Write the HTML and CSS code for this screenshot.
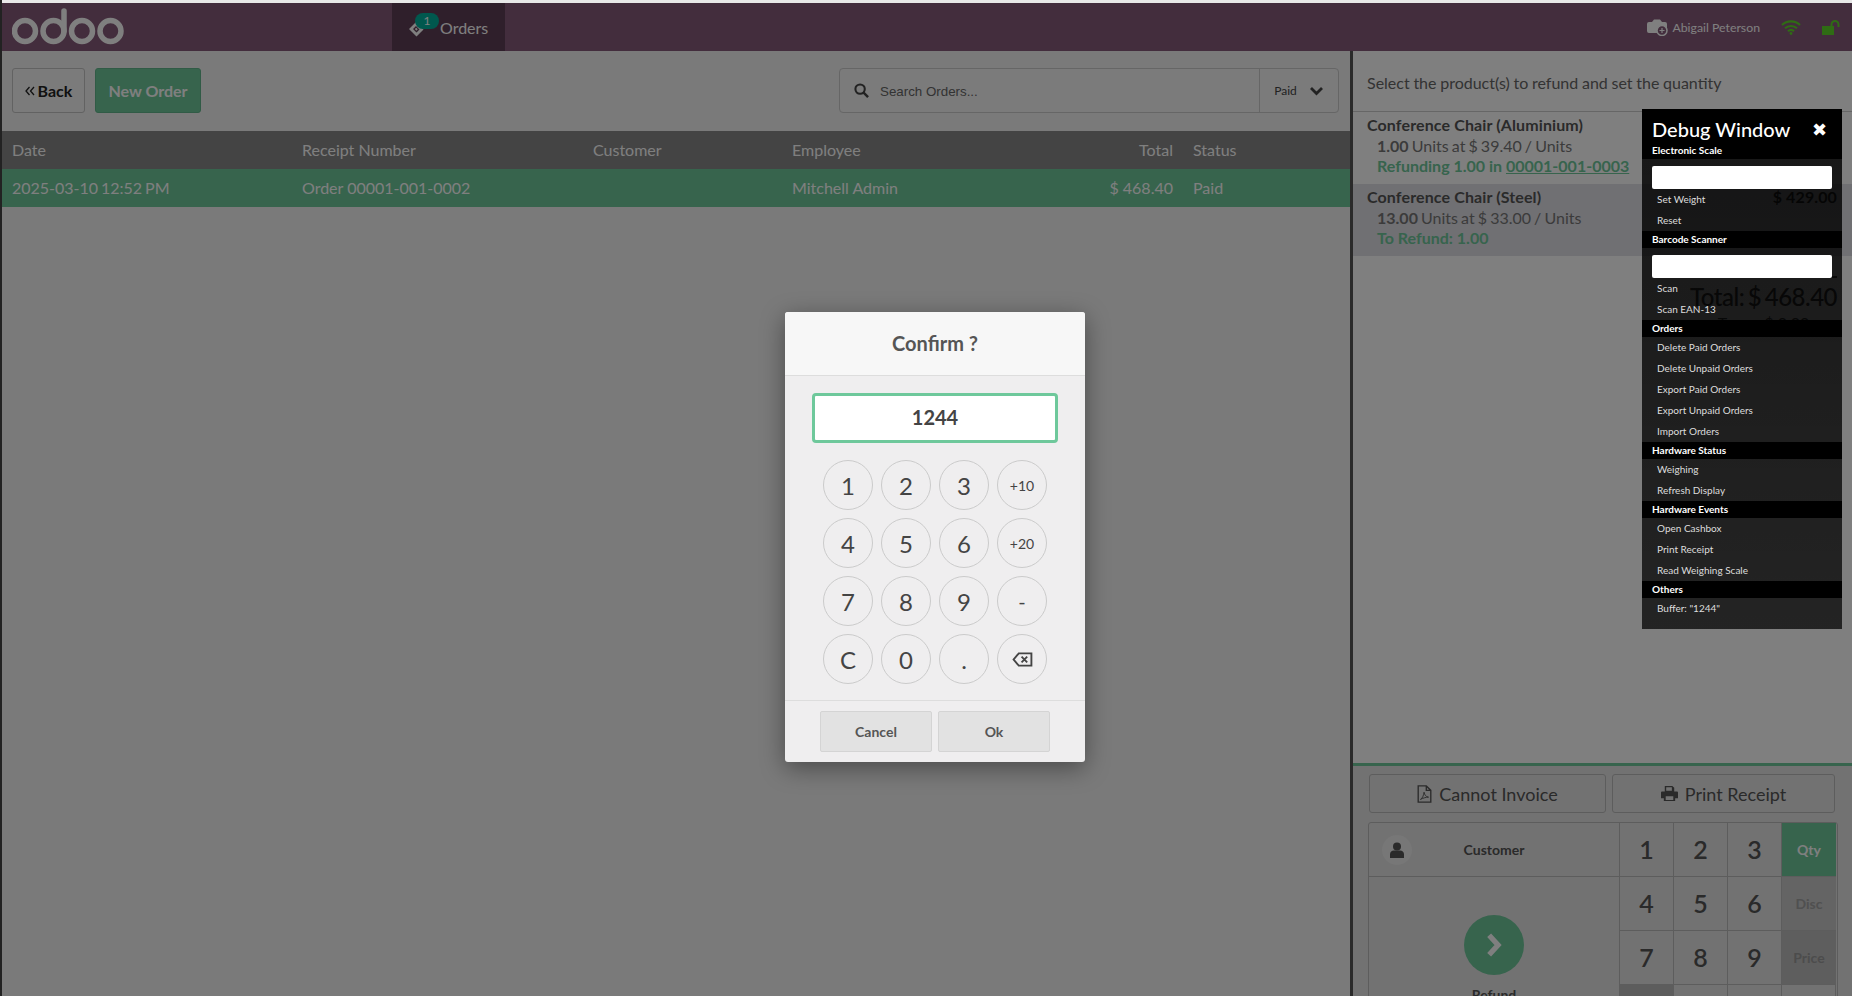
FILE: index.html
```html
<!DOCTYPE html>
<html lang="en">
<head>
    <meta charset="UTF-8">
    <title>Odoo POS</title>
    <link rel="stylesheet" href="styles.css">
</head>
<body>
<div class="pos">
    <header class="topbar">
        <svg class="logo" viewBox="0 0 112 38" width="112" height="38">
            <g fill="none" stroke="currentColor" stroke-width="5.500" stroke-linecap="round">
                <circle cx="13" cy="23" r="10.500"/>
                <circle cx="41.500" cy="23" r="10.500"/>
                <path d="M52 23V3"/>
                <circle cx="70" cy="23" r="10.500"/>
                <circle cx="98.500" cy="23" r="10.500"/>
            </g>
        </svg>
        <div class="tab">
            <span class="tab-icon">
                <svg viewBox="0 0 16 16" width="16" height="16"><path fill="currentColor" d="M1 8l7-7 7.500 7.500-7 7zM5 8l3.500 3.500 3-3L8 5z" fill-rule="evenodd"/><path fill="currentColor" d="M6.800 8l1.500-1.300 1.400 1.600-1.300 1.400z"/></svg>
                <span class="badge">1</span>
            </span>
            <span>Orders</span>
        </div>
        <div class="status">
            <svg class="cam" viewBox="0 0 21 17" width="21" height="17"><path fill="currentColor" d="M2 3h3l2-2.500h6L15 3h3a2 2 0 0 1 2 2v7a2 2 0 0 1-2 2H2a2 2 0 0 1-2-2V5a2 2 0 0 1 2-2z"/><circle cx="15" cy="11.500" r="5" fill="#875a7b" stroke="currentColor" stroke-width="1.500"/><path d="M15 9v5M12.500 11.500h5" stroke="currentColor" stroke-width="1.200"/></svg>
            <span class="cashier">Abigail Peterson</span>
            <svg class="wifi" viewBox="0 0 20 15" width="20" height="15"><g fill="none" stroke="currentColor" stroke-width="2.200"><path d="M1 5a13 13 0 0 1 18 0"/><path d="M4 8.300a9 9 0 0 1 12 0"/><path d="M7 11.200a4.500 4.500 0 0 1 6 0"/></g><circle cx="10" cy="13.500" r="1.400" fill="currentColor"/></svg>
            <svg class="lock" viewBox="0 0 18 15" width="18" height="15"><path fill="currentColor" d="M0 6h12v9H0z"/><path d="M9.500 6V4.500a3.500 3.500 0 0 1 7 0V7" fill="none" stroke="currentColor" stroke-width="2"/></svg>
        </div>
    </header>

    <main class="screen">
        <section class="orders">
            <div class="controls">
                <button class="btn btn-back">
                    <svg viewBox="0 0 10 10" width="10" height="10"><path d="M4.500 1L1 5l3.500 4M9 1L5.500 5 9 9" fill="none" stroke="currentColor" stroke-width="1.300"/></svg>
                    <span>Back</span>
                </button>
                <button class="btn btn-new">New Order</button>
                <div class="search">
                    <svg viewBox="0 0 16 16" width="15" height="15"><circle cx="6.500" cy="6.500" r="5" fill="none" stroke="currentColor" stroke-width="2.200"/><path d="M10 10l5 5" stroke="currentColor" stroke-width="2.600"/></svg>
                    <span class="search-text">Search Orders...</span>
                    <div class="search-filter">
                        <span>Paid</span>
                        <svg viewBox="0 0 14 10" width="15" height="10"><path d="M1.500 2l5.500 5.500L12.500 2" fill="none" stroke="currentColor" stroke-width="2.800"/></svg>
                    </div>
                </div>
            </div>
            <div class="order-row order-head">
                <div>Date</div><div>Receipt Number</div><div>Customer</div><div>Employee</div><div class="right">Total</div><div>Status</div>
            </div>
            <div class="order-row order-sel">
                <div class="order-date">2025-03-10 12:52 PM</div><div>Order 00001-001-0002</div><div></div><div>Mitchell Admin</div><div class="right">$ 468.40</div><div>Paid</div>
            </div>
        </section>

        <aside class="detail">
            <div class="lines">
                <div class="hint">Select the product(s) to refund and set the quantity</div>
                <div class="line">
                    <div class="line-name">Conference Chair (Aluminium)</div>
                    <div class="line-info"><b>1.00</b> Units at $ 39.40 / Units</div>
                    <div class="line-refund">Refunding 1.00 in <u>00001-001-0003</u></div>
                </div>
                <div class="line line-sel">
                    <div class="line-name line-top"><span>Conference Chair (Steel)</span><span class="line-price">$ 429.00</span></div>
                    <div class="line-info"><b>13.00</b> Units at $ 33.00 / Units</div>
                    <div class="line-refund">To Refund: 1.00</div>
                </div>
                <div class="summary">
                    <div class="summary-box">
                        <div class="sum-total">Total: $ 468.40</div>
                        <div class="sum-tax">Taxes: $ 0.00</div>
                    </div>
                </div>
            </div>
            <div class="pads">
                <div class="actions">
                    <button class="act act-inv">
                        <svg viewBox="0 0 16 20" width="15" height="18"><path fill="none" stroke="currentColor" stroke-width="1.500" d="M1 1h9l5 5v13H1zM10 1v5h5"/><path fill="none" stroke="currentColor" d="M3.500 16c2-1 3.500-4 4-8 .5 3 2 5 5 5.500-3 0-6 1-9 2.500z"/></svg>
                        Cannot Invoice
                    </button>
                    <button class="act act-print">
                        <svg viewBox="0 0 18 18" width="17" height="17"><path fill="currentColor" d="M4 1h8l2 2v4H4zM1 7h16a1 1 0 0 1 1 1v6h-3v3H3v-3H0V8a1 1 0 0 1 1-1z"/><path fill="#e4e4e4" d="M5 12h8v4H5zM5.500 2.500h6V6h-6z"/></svg>
                        Print Receipt
                    </button>
                </div>
                <div class="control-pad">
                    <div class="pad-left">
                        <div class="customer">
                            <span class="avatar"><svg viewBox="0 0 14 16" width="14" height="16"><circle cx="7" cy="4.500" r="4" fill="currentColor"/><path fill="currentColor" d="M0 16v-4a4 4 0 0 1 4-3.500h6a4 4 0 0 1 4 3.500v4z"/></svg></span>
                            <span class="customer-name">Customer</span>
                        </div>
                        <div class="refund">
                            <span class="refund-btn"><svg viewBox="0 0 24 32" width="20" height="26"><path d="M6 4l11 12L6 28" fill="none" stroke="currentColor" stroke-width="6.500"/></svg></span>
                            <span class="refund-label">Refund</span>
                        </div>
                    </div>
                    <div class="keys">
                        <div class="key">1</div><div class="key">2</div><div class="key">3</div><div class="key mode mode-on">Qty</div>
                        <div class="key">4</div><div class="key">5</div><div class="key">6</div><div class="key mode mode-off">Disc</div>
                        <div class="key">7</div><div class="key">8</div><div class="key">9</div><div class="key mode mode-off2">Price</div>
                        <div class="key key-off"></div><div class="key"></div><div class="key"></div><div class="key"></div>
                    </div>
                </div>
            </div>
        </aside>
    </main>

    <div class="backdrop">
        <div class="modal">
            <div class="modal-title">Confirm ?</div>
            <div class="modal-body">
                <div class="modal-input">1244</div>
                <div class="numpad">
                    <div class="num">1</div><div class="num">2</div><div class="num">3</div><div class="num num-sm">+10</div>
                    <div class="num">4</div><div class="num">5</div><div class="num">6</div><div class="num num-sm">+20</div>
                    <div class="num">7</div><div class="num">8</div><div class="num">9</div><div class="num num-minus">-</div>
                    <div class="num">C</div><div class="num">0</div><div class="num">.</div>
                    <div class="num"><svg viewBox="0 0 22 16" width="21" height="15"><path fill="none" stroke="currentColor" stroke-width="2" d="M7 1.500h13.500v13H7L1.500 8z"/><path stroke="currentColor" stroke-width="2" d="M10 5l6 6M16 5l-6 6"/></svg></div>
                </div>
            </div>
            <div class="modal-foot">
                <button class="modal-btn">Cancel</button>
                <button class="modal-btn">Ok</button>
            </div>
        </div>
    </div>

    <div class="debug">
        <div class="debug-head">
            <div class="debug-title"><span>Debug Window</span><span class="debug-close">✖</span></div>
            <div class="debug-sub">Electronic Scale</div>
        </div>
        <div class="debug-input"></div>
        <div class="debug-item">Set Weight</div>
        <div class="debug-item">Reset</div>
        <div class="debug-sec">Barcode Scanner</div>
        <div class="debug-input"></div>
        <div class="debug-item">Scan</div>
        <div class="debug-item">Scan EAN-13</div>
        <div class="debug-sec">Orders</div>
        <div class="debug-item">Delete Paid Orders</div>
        <div class="debug-item">Delete Unpaid Orders</div>
        <div class="debug-item">Export Paid Orders</div>
        <div class="debug-item">Export Unpaid Orders</div>
        <div class="debug-item">Import Orders</div>
        <div class="debug-sec">Hardware Status</div>
        <div class="debug-item">Weighing</div>
        <div class="debug-item">Refresh Display</div>
        <div class="debug-sec">Hardware Events</div>
        <div class="debug-item">Open Cashbox</div>
        <div class="debug-item">Print Receipt</div>
        <div class="debug-item">Read Weighing Scale</div>
        <div class="debug-sec">Others</div>
        <div class="debug-item">Buffer: "1244"</div>
    </div>
</div>
</body>
</html>
```

FILE: styles.css
```css
* {
    box-sizing: border-box;
}

html, body {
    margin: 0;
    height: 100%;
    overflow: hidden;
}

body {
    font-family: Lato, "Noto Sans", sans-serif;
    color: #555;
    background: #e8e8e8;
}

.pos {
    position: relative;
    height: 996px;
    padding-top: 3px;
    display: flex;
    flex-direction: column;
    overflow: hidden;
    border-left: 2px solid #222;
}

button {
    font-family: inherit;
}

/* top bar */
.topbar {
    height: 48px;
    flex: none;
    display: flex;
    align-items: center;
    background: #875a7b;
    color: #fff;
}

.logo {
    margin-left: 10px;
    flex: none;
    color: #fff;
}

.tab {
    margin-left: 268px;
    width: 113px;
    height: 100%;
    padding-left: 16px;
    background: #5f3f57;
    display: flex;
    align-items: center;
    gap: 16px;
    font-size: 16px;
}

.tab-icon {
    position: relative;
    display: flex;
    margin-top: 4px;
}

.badge {
    position: absolute;
    top: -8px;
    left: 7px;
    width: 24px;
    height: 16px;
    border-radius: 8px;
    background: #00b09c;
    font-size: 12px;
    line-height: 16px;
    text-align: center;
}

.status {
    margin-left: auto;
    padding-right: 12px;
    display: flex;
    align-items: center;
    font-size: 12.300px;
}

.cashier {
    margin-left: 4px;
}

.wifi {
    margin-left: 21px;
    color: #5ed828;
}

.lock {
    margin-left: 21px;
    color: #5ed828;
}

/* main */
.screen {
    flex: 1;
    min-height: 0;
    display: flex;
}

.orders {
    width: 1348px;
    flex: none;
    background: #f4f4f4;
}

.controls {
    height: 80px;
    padding: 17px 11px 0 10px;
    display: flex;
    align-items: flex-start;
    gap: 10px;
}

.btn {
    height: 45px;
    border-radius: 3px;
    font-size: 16px;
    font-weight: 700;
}

.btn-back {
    width: 73px;
    background: #f6f6f6;
    border: 1px solid #c4c4c4;
    color: #222;
    padding: 0;
    display: flex;
    align-items: center;
    justify-content: center;
    gap: 3px;
}

.btn-new {
    width: 106px;
    background: #6ec89b;
    border: 1px solid #62b78c;
    color: #fff;
    padding: 0;
}

.search {
    margin-left: auto;
    width: 500px;
    height: 45px;
    display: flex;
    align-items: center;
    background: #f6f6f6;
    border: 1px solid #ccc;
    border-radius: 4px;
    padding-left: 14px;
    color: #444;
    font-family: "Liberation Sans", sans-serif;
    font-size: 13.330px;
}

.search-text {
    margin: 2px 0 0 11px;
    flex: 1;
    color: #666;
}

.search-filter {
    width: 79px;
    height: 100%;
    border-left: 1px solid #ccc;
    display: flex;
    align-items: center;
    justify-content: center;
    gap: 12px;
    font-family: Lato, sans-serif;
    font-size: 12px;
}

.order-row {
    height: 38px;
    display: grid;
    grid-template-columns: 290px 291px 199px 281px 100px 1fr;
    align-items: center;
    padding: 0 0 2px 10px;
    font-size: 16px;
    color: #fff;
}

.order-head {
    background: #888;
}

.order-sel {
    background: #6ec89b;
}

.order-date {
    word-spacing: -1.200px;
}

.right {
    text-align: right;
}

.order-row > div:last-child {
    padding-left: 20px;
}

/* right side */
.detail {
    flex: 1;
    display: flex;
    flex-direction: column;
    min-width: 0;
    border-left: 3px solid #555;
    background: #fff;
}

.lines {
    flex: 1;
    min-height: 0;
}

.hint {
    height: 61px;
    padding: 22px 14px 0;
    font-size: 16px;
    word-spacing: -.4px;
    color: #666;
    border-bottom: 1px solid #ccc;
}

.line {
    height: 72px;
    padding: 3px 15px 0 14px;
    font-size: 16px;
    line-height: 20.500px;
}

.line-sel {
    background: #e0e0e6;
}

.line-name {
    font-weight: 700;
    letter-spacing: .12px;
    color: #555;
}

.line-top {
    display: flex;
    justify-content: space-between;
}

.line-price {
    color: #333;
}

.line-info {
    padding-left: 10px;
    word-spacing: -1px;
    color: #777;
}

.line-refund {
    padding-left: 10px;
    color: #6ec89b;
    font-weight: 700;
}

.summary {
    display: flex;
    justify-content: flex-end;
    padding: 20px 15px 0 0;
    color: #444;
}

.summary-box {
    border-top: 2px solid #444;
    text-align: center;
}

.sum-total {
    font-size: 24px;
    font-weight: 500;
    line-height: 34px;
    margin-top: 2px;
    letter-spacing: -.5px;
    word-spacing: -2px;
}

.sum-tax {
    font-size: 16px;
    line-height: 18px;
}

.pads {
    height: 233px;
    flex: none;
    border-top: 3px solid #6ec89b;
    background: #e4e4e4;
    padding: 8px 14px 0 15px;
}

.actions {
    display: flex;
    gap: 6px;
    height: 39px;
    margin-left: 1px;
}

.act {
    height: 100%;
    background: transparent;
    border: 1px solid #bbb;
    border-radius: 3px;
    font-size: 18px;
    color: #555;
    display: flex;
    align-items: center;
    justify-content: center;
    gap: 7px;
}

.act-inv {
    width: 237px;
}

.act-print {
    width: 223px;
}

.control-pad {
    margin-top: 9px;
    display: grid;
    grid-template-columns: 251px 216px;
    border: 1px solid #bbb;
    border-radius: 3px 3px 0 0;
    height: 260px;
}

.pad-left {
    border-right: 1px solid #bbb;
}

.customer {
    height: 54px;
    border-bottom: 1px solid #bbb;
    display: flex;
    align-items: center;
    padding-left: 13px;
}

.avatar {
    width: 30px;
    height: 30px;
    border-radius: 50%;
    background: #eee;
    display: flex;
    align-items: center;
    justify-content: center;
    color: #555;
}

.customer-name {
    flex: 1;
    padding-right: 43px;
    text-align: center;
    font-size: 14px;
    font-weight: 700;
}

.refund {
    display: flex;
    flex-direction: column;
    align-items: center;
    padding-top: 38px;
}

.refund-btn {
    width: 60px;
    height: 60px;
    border-radius: 50%;
    background: #6ec89b;
    color: #fff;
    display: flex;
    align-items: center;
    justify-content: center;
}

.refund-label {
    margin-top: 11px;
    font-size: 14px;
    font-weight: 700;
}

.keys {
    display: grid;
    grid-template-columns: repeat(4, 54px);
    grid-auto-rows: 54px;
}

.key {
    display: flex;
    align-items: center;
    justify-content: center;
    padding-bottom: 2px;
    font-size: 25px;
    font-weight: 600;
    border-right: 1px solid #bbb;
    border-bottom: 1px solid #bbb;
}

.mode {
    font-size: 14px;
    font-weight: 700;
    border-right: 0;
    padding-bottom: 0;
}

.mode-on {
    background: #6ec89b;
    color: #fff;
}

.mode-off {
    background: #c8c8c8;
    color: #a0a0a0;
}

.mode-off2 {
    background: #bcbcbc;
    color: #999;
}

.key-off {
    background: #bbb;
}

/* popup */
.backdrop {
    position: absolute;
    left: 0;
    right: 0;
    top: 3px;
    bottom: 0;
    background: rgba(0, 0, 0, .5);
    display: flex;
    justify-content: center;
    padding-top: 309px;
    padding-left: 16px;
}

.modal {
    width: 300px;
    height: 450px;
    background: #efeeef;
    border-radius: 3px;
    box-shadow: 0 6px 24px rgba(0, 0, 0, .4);
    display: flex;
    flex-direction: column;
    color: #444;
}

.modal-title {
    height: 64px;
    background: #f7f7f7;
    border-bottom: 1px solid #ddd;
    border-radius: 3px 3px 0 0;
    text-align: center;
    font-size: 20px;
    font-weight: 700;
    line-height: 63px;
    color: #555;
}

.modal-body {
    flex: 1;
    padding: 17px 27px 0;
}

.modal-input {
    height: 50px;
    background: #fff;
    border: 3px solid #6ec89b;
    border-radius: 4px;
    text-align: center;
    font-size: 20px;
    font-weight: 700;
    line-height: 43px;
}

.numpad {
    margin-top: 17px;
    padding: 0 9px 0 11px;
    display: grid;
    grid-template-columns: repeat(4, 50px);
    grid-auto-rows: 50px;
    gap: 8px;
}

.num {
    border: 1px solid #cbcbcb;
    border-radius: 50%;
    display: flex;
    align-items: center;
    justify-content: center;
    font-size: 24px;
}

.num-sm {
    font-size: 14px;
}

.num-minus {
    font-size: 20px;
}

.modal-foot {
    height: 62px;
    flex: none;
    border-top: 1px solid #ddd;
    padding: 10px 35px 0;
    display: flex;
    gap: 6px;
}

.modal-btn {
    width: 112px;
    height: 41px;
    background: #e2e2e2;
    border: 1px solid #d4d4d4;
    border-radius: 2px;
    color: #555;
    font-size: 14px;
    font-weight: 700;
    padding: 0;
}

/* debug window */
.debug {
    position: absolute;
    top: 109px;
    right: 10px;
    width: 200px;
    height: 520px;
    background: linear-gradient(rgba(0, 0, 0, .82), rgba(0, 0, 0, .72));
    color: #ddd;
    font-size: 10px;
}

.debug-head {
    height: 50px;
    background: #000;
    color: #fff;
    padding: 8px 15px 0 10px;
}

.debug-title {
    display: flex;
    justify-content: space-between;
    font-size: 20px;
    font-weight: 500;
    line-height: 24px;
}

.debug-close {
    font-size: 18px;
}

.debug-sub {
    font-weight: 700;
    line-height: 14px;
    margin-top: 2px;
}

.debug-sec {
    height: 17px;
    background: #000;
    color: #fff;
    font-weight: 700;
    padding-left: 10px;
    line-height: 17px;
}

.debug-input {
    height: 23px;
    margin: 7px 10px 0;
    background: #fff;
    border-radius: 2px;
}

.debug-item {
    height: 21px;
    padding-left: 15px;
    line-height: 21px;
}
```
